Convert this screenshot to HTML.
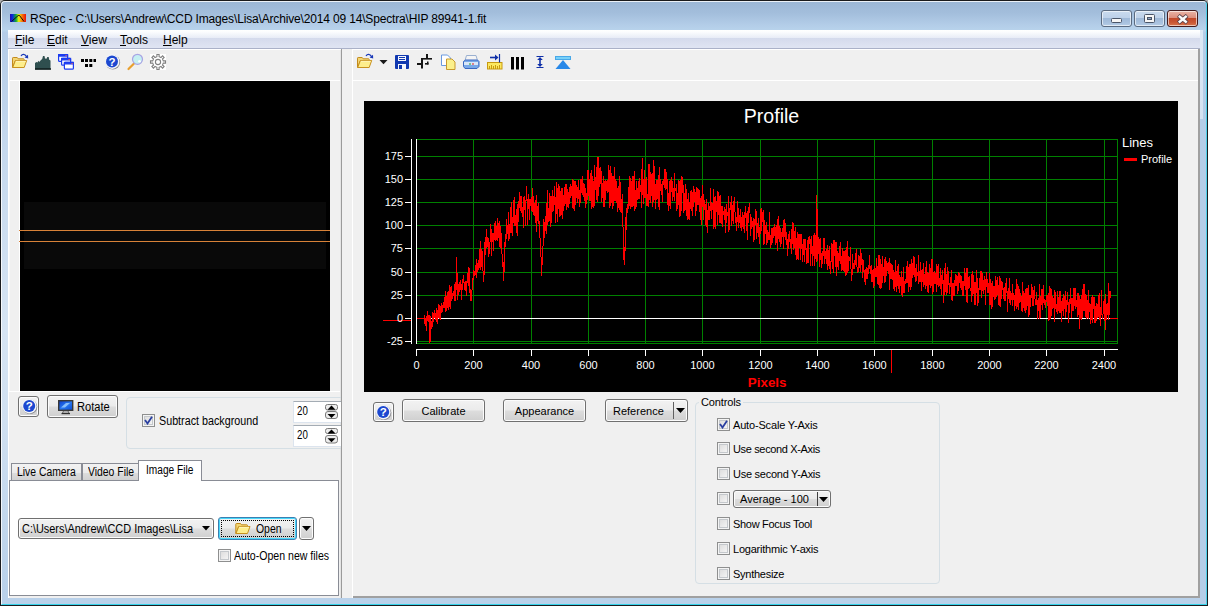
<!DOCTYPE html>
<html><head><meta charset="utf-8"><title>RSpec</title>
<style>
*{box-sizing:border-box;margin:0;padding:0}
html,body{width:1208px;height:606px;overflow:hidden}
body{position:relative;font-family:"Liberation Sans",sans-serif;font-size:11px;color:#000;background:#b0b0b0}
.abs{position:absolute}
#frame{position:absolute;left:0;top:0;width:1208px;height:606px;border-radius:5px 5px 0 0;
 background:linear-gradient(180deg,#9bb6d5 0,#a3bedc 12px,#b3cde8 24px,#b9d4ec 30px,rgba(185,209,234,0) 31px),
  linear-gradient(90deg,rgba(0,0,0,0) 0,rgba(0,0,0,0) 1199px,#b4cde8 1199px),
  linear-gradient(180deg,#b4cce8 30px,#c6d9ee 150px,#d6e4f3 330px,#d0e0f1 420px,#b9d1ea 590px);
 border:1px solid #1a1c20;border-top-color:#1a1a1c;}
#frame:before{content:"";position:absolute;left:0;top:0;right:0;bottom:0;border:1px solid rgba(255,255,255,.8);border-radius:4px 4px 0 0;border-bottom-color:#35d3ea;border-right-color:#4fd0ea}
#frame:after{content:"";position:absolute;left:1199px;top:29px;width:3px;height:89px;background:linear-gradient(180deg,#dce8f5,#d4e2f2)}
#title{left:30px;top:12px;font-size:12px;white-space:nowrap;line-height:15px;letter-spacing:-0.16px}
#client{left:8px;top:30px;width:1192px;height:568px;background:#f0f0f0}
#menubar{left:0;top:0;width:1192px;height:19px;background:linear-gradient(180deg,#ffffff 0,#fbfcfe 2px,#e9edf7 7.500px,#d4daec 8px,#dfe4f2 17.500px,#aab1c8 18px,#aab1c8 19px);}
.mi{position:absolute;top:3px;font-size:12px;line-height:15px}
.mi u{text-decoration:underline}
.wb{position:absolute;top:10px;height:17px;border:1px solid #5a6a80;border-radius:3px;box-shadow:inset 0 0 0 1px rgba(255,255,255,.6)}
#leftp{left:0;top:19px;width:334px;height:549px;overflow:hidden;background:#f0f0f0;border-right:1px solid #9a9a9a}
#rightp{left:344px;top:19px;width:848px;height:549px;background:#f0f0f0;border-right:2px solid #a0a0a0;border-bottom:2px solid #a0a0a0}
.btn{position:absolute;border:1px solid #707070;border-radius:3px;background:linear-gradient(180deg,#f2f2f2 0,#ebebeb 48%,#dddddd 52%,#cfcfcf 100%);box-shadow:inset 0 0 0 1px #fcfcfc;text-align:center;white-space:nowrap}
.cb{position:absolute;width:13px;height:13px;border:1px solid #8e8f8f;background:linear-gradient(135deg,#d8d8d8,#fafafa);box-shadow:inset 0 0 0 1px #f4f4f4, inset 0 0 0 2px #c4c8cc}
.lbl{position:absolute;white-space:nowrap;line-height:13px}
.rt{font-size:11px}
.lbl.rt{letter-spacing:-0.12px}
.ls{font-size:12px;transform-origin:0 50%}
</style></head><body>
<div id="frame"></div>
<!-- title bar -->
<svg class="abs" style="left:10px;top:14px" width="16" height="8" viewBox="0 0 16 8">
 <defs><linearGradient id="spec" x1="0" x2="1" y1="0" y2="0"><stop offset="0" stop-color="#2808b0"/><stop offset=".15" stop-color="#0828e0"/><stop offset=".38" stop-color="#10b030"/><stop offset=".55" stop-color="#f0f010"/><stop offset=".75" stop-color="#f87808"/><stop offset="1" stop-color="#e81010"/></linearGradient></defs>
 <rect width="16" height="8" fill="url(#spec)"/><path d="M1.500 7.500L8.200 1.500H9.500L14 7.500" stroke="#181008" stroke-width="1" fill="none"/>
</svg>
<div id="title" class="abs">RSpec - C:\Users\Andrew\CCD Images\Lisa\Archive\2014 09 14\Spectra\HIP 89941-1.fit</div>
<div class="wb" style="left:1101px;width:31px;background:linear-gradient(180deg,#c9daee 0,#bdd1e9 46%,#9fb9d8 50%,#a9c2df 80%,#b8cee7 100%)"><div class="abs" style="left:9px;top:7px;width:11px;height:5px;background:#f6f6f6;border:1px solid #4a5568;border-radius:1.500px"></div></div>
<div class="wb" style="left:1134px;width:31px;background:linear-gradient(180deg,#c9daee 0,#bdd1e9 46%,#9fb9d8 50%,#a9c2df 80%,#b8cee7 100%)"><div class="abs" style="left:9px;top:3px;width:11px;height:9px;background:#f6f6f6;border:1px solid #4a5568;border-radius:1.500px"><div class="abs" style="left:2px;top:2px;width:5px;height:3px;background:#8fa6c6;border:1px solid #4a5568"></div></div></div>
<div class="wb" style="left:1167px;width:31px;border-color:#431a1c;background:linear-gradient(180deg,#e9b4a6 0,#dc8e7c 46%,#c2492a 50%,#c95734 75%,#d8764c 100%)"><svg class="abs" style="left:8px;top:2.500px" width="14" height="12" viewBox="0 0 14 12"><path d="M2.300 1.500L11.200 8.900M11.200 1.500L2.300 8.900" stroke="#5a4048" stroke-width="4.200" fill="none"/><path d="M2.800 1.900L10.700 8.500M10.700 1.900L2.800 8.500" stroke="#fafafa" stroke-width="2.500" fill="none"/></svg></div>

<div id="client" class="abs">
 <div id="menubar" class="abs">
  <div class="mi" style="left:7px"><u>F</u>ile</div>
  <div class="mi" style="left:39px"><u>E</u>dit</div>
  <div class="mi" style="left:73px"><u>V</u>iew</div>
  <div class="mi" style="left:112px"><u>T</u>ools</div>
  <div class="mi" style="left:155px"><u>H</u>elp</div>
 </div>
 <div id="leftp" class="abs">
  <!-- toolbar icons -->
<div class="abs" style="left:0;top:0;width:333px;height:1px;background:#fff"></div><div class="abs" style="left:332px;top:1px;width:1px;height:548px;background:#e4e4e4"></div>
<svg class="abs" style="left:0;top:0" width="170" height="30" viewBox="8 49 170 30">
 <!-- open folder -->
 <g transform="translate(12 57)"><path d="M.5 10.300V1.200q0-.7.7-.7h4l1 1.300h5.300q.7 0 .7.700v1.500h-9l-2.600 6.500z" fill="#f3d572" stroke="#c28a1c" stroke-linejoin="round"/><path d="M.7 10.500l2.700-7h11.300l-2.500 7z" fill="#fdee8c" stroke="#c8921e" stroke-linejoin="round"/><path d="M3.900 4.300h9.800" stroke="#fff8c8" stroke-width=".8"/></g>
 <g transform="translate(20.7 53.7)"><path d="M.3 2.300c1.300-2.200 3.800-2.300 5.600 .6" fill="none" stroke="#1838b8" stroke-width="1.200"/><path d="M7.300 1l.2 3.800-3.600-.9z" fill="#1838b8"/></g>
 <!-- histogram -->
 <path d="M35 69.500v-6.500l1.500-1 1 .5 .8-1.800 .9 1.300 1.800-2 1.200-1 .8-3h1.500l.5 2.500 1.500.3 .8-1.800h1.400l.5 2.800 1.300.7v9z" fill="#2f4f4f"/>
 <path d="M35 69h16" stroke="#0c1818" stroke-width="1.400"/>
 <!-- windows cascade -->
 <g stroke="#1c3cf0" stroke-width="1.200" fill="#fff">
  <rect x="58.600" y="54.600" width="9" height="6.800" rx="1"/><rect x="58.600" y="54.600" width="9" height="1.500" fill="#1c3cf0"/>
  <rect x="61.600" y="58.400" width="9" height="6.800" rx="1"/><rect x="61.600" y="58.400" width="9" height="1.500" fill="#1c3cf0"/>
  <rect x="64.400" y="62.400" width="9" height="6.800" rx="1"/><rect x="64.400" y="62.400" width="9" height="1.500" fill="#1c3cf0"/>
 </g>
 <g fill="#f06060"><rect x="65.500" y="55" width="1.200" height="1.200"/><rect x="68.500" y="59" width="1.200" height="1.200"/><rect x="71.500" y="63" width="1.200" height="1.200"/></g>
 <!-- dots -->
 <g fill="#000"><rect x="81" y="59" width="3" height="3"/><rect x="85" y="59" width="3" height="3"/><rect x="89.300" y="59" width="3" height="3"/><rect x="93.500" y="59" width="2.500" height="3"/><rect x="85" y="64" width="3" height="3"/><rect x="89.300" y="64" width="3" height="3"/></g>
 <!-- help -->
 <circle cx="112.800" cy="62.300" r="7.300" fill="#8a8a90"/>
 <circle cx="112.200" cy="61.700" r="7.200" fill="#f4f6fa"/>
 <circle cx="112" cy="61.500" r="6" fill="#1c48d0"/>
 <text x="112" y="65.600" font-family="Liberation Sans, sans-serif" font-weight="bold" font-size="11.500" fill="#fff" text-anchor="middle">?</text>
 <!-- magnifier -->
 <path d="M133.800 63.800l-5.300 5.200" stroke="#e8a030" stroke-width="2.200" stroke-linecap="round"/>
 <circle cx="137.500" cy="59.300" r="5" fill="#c4f0f2" stroke="#a8a4e4" stroke-width="1.200"/>
 <circle cx="139.500" cy="61.300" r="1.300" fill="#fff"/>
 <!-- gear -->
 <rect x="150" y="54" width="16" height="16" fill="#fff"/>
 <g fill="none" stroke="#808080" stroke-width="1.100">
  <circle cx="158" cy="62" r="2.600"/>
  <path d="M156.9 56.7L156.9 54.5L159.1 54.5L159.1 56.7L161.0 57.5L162.6 55.9L164.1 57.4L162.5 59.0L163.3 60.9L165.5 60.9L165.5 63.1L163.3 63.1L162.5 65.0L164.1 66.6L162.6 68.1L161.0 66.5L159.1 67.3L159.1 69.5L156.9 69.5L156.9 67.3L155.0 66.5L153.4 68.1L151.9 66.6L153.5 65.0L152.7 63.1L150.5 63.1L150.5 60.9L152.7 60.9L153.5 59.0L151.9 57.4L153.4 55.9L155.0 57.5z"/>
 </g>
</svg>
<div class="abs" style="left:0;top:31px;width:332px;height:1px;background:#fff"></div><div class="abs" style="left:0;top:0;width:1px;height:549px;background:#fff"></div><div class="abs" style="left:11px;top:31px;width:1px;height:311px;background:#fff"></div><div class="abs" style="left:1px;top:31px;width:1px;height:311px;background:#f8f8f8"></div>
<!-- image -->
<div class="abs" style="left:12px;top:32px;width:310px;height:310px;background:#000">
 <div class="abs" style="left:4px;top:121px;width:302px;height:67px;background:#090909"></div>
 <div class="abs" style="left:-1px;top:149px;width:311px;height:1px;background:#d88238"></div>
 <div class="abs" style="left:-1px;top:160px;width:311px;height:1px;background:#d88238"></div>
</div>
<div class="abs" style="left:0;top:342px;width:332px;height:1px;background:#fff"></div>
<!-- help btn -->
<div class="btn" style="left:10px;top:347px;width:21px;height:21px"></div>
<svg class="abs" style="left:12.500px;top:348px" width="18" height="18" viewBox="0 0 18 18"><circle cx="9" cy="9.800" r="7.300" fill="#8a8a90"/><circle cx="8.400" cy="9.200" r="7.200" fill="#f4f6fa"/><circle cx="8.200" cy="9" r="6" fill="#1c48d0"/><text x="8.200" y="13.100" font-family="Liberation Sans, sans-serif" font-weight="bold" font-size="11.500" fill="#fff" text-anchor="middle">?</text></svg>
<!-- rotate -->
<div class="btn" style="left:39px;top:346px;width:71px;height:23px"></div>
<svg class="abs" style="left:50px;top:351px" width="16" height="15" viewBox="0 0 16 15"><defs><linearGradient id="scr" x1="0" y1="0" x2="1" y2="1"><stop offset="0" stop-color="#0838c8"/><stop offset=".5" stop-color="#2878f0"/><stop offset="1" stop-color="#0848d0"/></linearGradient></defs><rect x=".7" y=".7" width="14" height="9.600" fill="url(#scr)" stroke="#383838" stroke-width="1.400"/><path d="M3 7.500l5-4.500h4l-5 4.500z" fill="#a8d8ff" opacity=".75"/><path d="M5.500 11h4.500l1 2h-6.500z" fill="#f0f0f0" stroke="#484848" stroke-width=".8"/><path d="M3.500 13.600h8.500" stroke="#303030" stroke-width="1.200"/></svg>
<div class="lbl ls" style="left:69px;top:352px;transform:scaleX(0.925)">Rotate</div>
<!-- group -->
<div class="abs" style="left:118px;top:348px;width:230px;height:52px;border:1px solid #d5dfe5;border-radius:4px"></div>
<div class="cb" style="left:134px;top:365px"><svg class="abs" style="left:1px;top:1px" width="9" height="9" viewBox="0 0 9 9"><path d="M1 4l2.500 3.500L8 .8" fill="none" stroke="#2a3fa0" stroke-width="1.800"/></svg></div>
<div class="lbl ls" style="left:151px;top:366px;transform:scaleX(0.895)">Subtract background</div>
<div class="abs" style="left:285px;top:352px;width:50px;height:22px;background:#fff;border:1px solid #dce4ee;border-top-color:#a4acb4"></div>
<div class="lbl ls" style="left:289px;top:356px;transform:scaleX(0.810)">20</div>
<div class="abs" style="left:285px;top:376px;width:50px;height:22px;background:#fff;border:1px solid #dce4ee;border-top-color:#a4acb4"></div>
<div class="lbl ls" style="left:289px;top:380px;transform:scaleX(0.810)">20</div>
<svg class="abs" style="left:316px;top:354px" width="14" height="42" viewBox="0 0 14 42">
 <g fill="#ececec" stroke="#7a7a7a" stroke-width="1"><rect x="1.500" y="1.500" width="12" height="5.500" rx="2"/><rect x="1.500" y="8.500" width="12" height="7" rx="2.500"/><rect x="1.500" y="25.500" width="12" height="5" rx="2"/><rect x="1.500" y="32.500" width="12" height="7.500" rx="2.500"/></g>
 <g fill="#000"><path d="M3.500 6.800l4-4.300 4 4.300z"/><path d="M3.500 11l4 4 4-4z"/><path d="M3.500 30.500l4-4 4 4z"/><path d="M3.500 35.300l4 4 4-4z"/></g>
</svg>
<!-- tabs -->
<div class="abs" style="left:3px;top:414px;width:71px;height:18px;border:1px solid #898c95;border-bottom:none;background:linear-gradient(180deg,#f2f2f2 0,#ebebeb 50%,#dddddd 51%,#cfcfcf 100%)"></div>
<div class="abs" style="left:74px;top:414px;width:57px;height:18px;border:1px solid #898c95;border-bottom:none;background:linear-gradient(180deg,#f2f2f2 0,#ebebeb 50%,#dddddd 51%,#cfcfcf 100%)"></div>
<div class="abs" style="left:1px;top:431px;width:330px;height:116px;border:1px solid #898c95;background:#fff"></div>
<div class="abs" style="left:130px;top:411px;width:64px;height:21px;border:1px solid #898c95;border-bottom:none;background:#fff"></div>
<div class="lbl ls" style="left:9px;top:417px;transform:scaleX(0.865)">Live Camera</div>
<div class="lbl ls" style="left:80px;top:417px;transform:scaleX(0.866)">Video File</div>
<div class="lbl ls" style="left:138px;top:415px;transform:scaleX(0.845)">Image File</div>
<!-- combo -->
<div class="btn" style="left:10px;top:469px;width:196px;height:21px;text-align:left"></div>
<div class="lbl ls" style="left:14px;top:474px;transform:scaleX(0.909)">C:\Users\Andrew\CCD Images\Lisa</div>
<svg class="abs" style="left:194px;top:477px" width="8" height="5" viewBox="0 0 8 5"><path d="M0 0h8L4 4.500z" fill="#000"/></svg>
<!-- open -->
<div class="btn" style="left:210px;top:468px;width:79px;height:23px;border-color:#3c7fb1;box-shadow:inset 0 0 0 1px #48d8fb"></div>
<div class="abs" style="left:213px;top:471px;width:73px;height:17px;border:1px dotted #000"></div>
<svg class="abs" style="left:227px;top:473px" width="16" height="13" viewBox="0 0 16 13"><g transform="translate(0.3 1)"><path d="M.5 10.300V1.200q0-.7.7-.7h4l1 1.300h5.300q.7 0 .7.700v1.500h-9l-2.600 6.500z" fill="#f3d572" stroke="#c28a1c" stroke-linejoin="round"/><path d="M.7 10.500l2.700-7h11.300l-2.500 7z" fill="#fdee8c" stroke="#c8921e" stroke-linejoin="round"/><path d="M3.900 4.300h9.800" stroke="#fff8c8" stroke-width=".8"/></g></svg>
<div class="lbl ls" style="left:248px;top:474px;transform:scaleX(0.869)">Open</div>
<div class="btn" style="left:291px;top:468px;width:15px;height:23px"></div>
<svg class="abs" style="left:294px;top:477px" width="9" height="5" viewBox="0 0 9 5"><path d="M0 0h9L4.500 5z" fill="#000"/></svg>
<div class="cb" style="left:210px;top:500px"></div>
<div class="lbl ls" style="left:226px;top:501px;transform:scaleX(0.880)">Auto-Open new files</div>

 </div>
 <div id="rightp" class="abs">
  <div class="abs" style="left:0;top:0;width:1px;height:549px;background:#fff"></div>
<div class="abs" style="left:0;top:31px;width:846px;height:1px;background:#fff"></div>
<div class="abs" style="left:0;top:0;width:846px;height:1px;background:#fff"></div>
<svg class="abs" style="left:0;top:0" width="240" height="30" viewBox="352 49 240 30">
 <!-- folder -->
 <g transform="translate(357 57)"><path d="M.5 10.300V1.200q0-.7.7-.7h4l1 1.300h5.300q.7 0 .7.700v1.500h-9l-2.600 6.500z" fill="#f3d572" stroke="#c28a1c" stroke-linejoin="round"/><path d="M.7 10.500l2.700-7h11.300l-2.500 7z" fill="#fdee8c" stroke="#c8921e" stroke-linejoin="round"/><path d="M3.900 4.300h9.800" stroke="#fff8c8" stroke-width=".8"/></g>
 <g transform="translate(365.7 53.7)"><path d="M.3 2.300c1.300-2.200 3.800-2.300 5.600 .6" fill="none" stroke="#1838b8" stroke-width="1.200"/><path d="M7.300 1l.2 3.800-3.600-.9z" fill="#1838b8"/></g>
 <path d="M379.500 60h8l-4 4.200z" fill="#1a1a1a"/>
 <!-- save -->
 <rect x="395" y="55" width="14" height="14" rx="1" fill="#1038b0"/>
 <rect x="398" y="56" width="8" height="5" fill="#f4f6fc"/><path d="M399 57.500h6M399 59.500h6" stroke="#1038b0" stroke-width="1"/>
 <rect x="398" y="64" width="8" height="5" fill="#f4f6fc"/><rect x="399" y="65" width="3" height="4" fill="#1038b0"/>
 <!-- crosshair -->
 <g fill="#151515"><rect x="417" y="63" width="5" height="2"/><rect x="421" y="58" width="2" height="10.500"/><rect x="421" y="58" width="11" height="1.600"/><rect x="426" y="54" width="2" height="4.500"/><rect x="425" y="63" width="3.500" height="1.600"/><rect x="427" y="61.500" width="1.500" height="3"/></g>
 <!-- copy -->
 <path d="M441.500 55h6l3 3v7.500h-9z" fill="#fff" stroke="#6a9ae0"/>
 <path d="M446.500 59h5.500l3 3v7.500h-8.500z" fill="#fbf08c" stroke="#c89a2e"/>
 <!-- printer -->
 <path d="M466.500 55.500h9.500l1.500 5h-12.500z" fill="#f4f4f4" stroke="#9ab0d0"/>
 <path d="M463.500 61.500l2-1.500h12l1.500 1.500v5l-2 2h-12l-1.500-2z" fill="#78a8e8" stroke="#3a68c0"/>
 <rect x="464" y="62" width="14" height="3" fill="#d8e6f8"/><rect x="469" y="63.500" width="2" height="1" fill="#20a020"/><rect x="472" y="63.500" width="2" height="1" fill="#e02020"/>
 <!-- ruler -->
 <rect x="487.500" y="62.500" width="14.500" height="6.500" fill="#fbe860" stroke="#c89a10"/>
 <path d="M489.500 66v3M491.500 65v4M493.500 66v3M495.500 65v4M497.500 66v3M499.500 65v4" stroke="#c89a10" stroke-width="1"/>
 <path d="M490 57.500h6" stroke="#1030a8" stroke-width="1.600"/><path d="M495 54.500l3.500 3-3.500 3z" fill="#1030a8"/><path d="M499.500 54v8.500" stroke="#1030a8" stroke-width="1.200"/>
 <!-- bars -->
 <rect x="511" y="57" width="3" height="12.500" fill="#000"/><rect x="516" y="57" width="3" height="12.500" fill="#000"/><rect x="521" y="57" width="3" height="12.500" fill="#000"/>
 <!-- v arrows -->
 <g stroke="#1030a8" fill="#1030a8"><path d="M536.500 56.500h7M536.500 67.500h7" stroke-width="1"/><path d="M540 58v8" stroke-width="1.600"/><path d="M540 57l2.800 3h-5.600zM540 67l2.800-3h-5.600z" stroke="none"/></g>
 <!-- triangle -->
 <rect x="555.500" y="56.500" width="15" height="3" fill="#78d0f8" stroke="#48a8e8"/>
 <path d="M563 60l7.500 9h-15z" fill="#2888e8"/>
</svg>

<svg class="abs" style="left:12px;top:52px" width="814" height="291" viewBox="364 101 814 291" font-family="Liberation Sans, sans-serif">
 <rect x="364" y="101" width="814" height="291" fill="#000"/>
 <g stroke="#008000" stroke-width="1" shape-rendering="crispEdges" fill="none">
  <path d="M416 139.500H1118M416 156.500H1118M416 179.500H1118M416 202.500H1118M416 225.500H1118M416 248.500H1118M416 272.500H1118M416 295.500H1118M416 341.500H1118M416 343.500H1118"/>
  <path d="M473.500 139V344M531.500 139V344M588.500 139V344M645.500 139V344M702.500 139V344M760.500 139V344M817.500 139V344M874.500 139V344M932.500 139V344M989.500 139V344M1046.500 139V344M1104.500 139V344M1117.500 139V344"/>
 </g>
 <g stroke="#fff" stroke-width="1" shape-rendering="crispEdges" fill="none">
  <path d="M416 318.500H1118"/>
  <path d="M416.500 139V344M411.500 139V344"/>
  <path d="M405 156.500h6M405 179.500h6M405 202.500h6M405 225.500h6M405 248.500h6M405 272.500h6M405 295.500h6M405 318.500h6M405 341.500h6"/>
  <path d="M416 349.500H1118"/>
  <path d="M416.500 350v6M473.500 350v6M531.500 350v6M588.500 350v6M645.500 350v6M702.500 350v6M760.500 350v6M817.500 350v6M874.500 350v6M932.500 350v6M989.500 350v6M1046.500 350v6M1104.500 350v6"/>
 </g>
 <g stroke="#ff0000" stroke-width="1" shape-rendering="crispEdges"><path d="M383 320.500H411M417 318.500H424M1110 318.500H1118M891.500 350V373"/></g>
 <polyline fill="none" stroke="#ff0000" stroke-width="1" stroke-linejoin="bevel" shape-rendering="crispEdges" points="424.2,323.6 424.5,315.6 424.8,315.9 425.1,325.5 425.4,323.9 425.7,324.8 425.9,318.1 426.2,321.3 426.5,316.5 426.8,331.3 427.1,311.5 427.4,320.9 427.7,316.3 428,320.9 428.2,322.1 428.5,317.1 428.8,314.9 429.1,320.7 429.4,320.2 429.7,315.3 430,343.2 430.3,327.6 430.5,316.5 430.8,322.5 431.1,329.4 431.4,323 431.7,320.8 432,324.9 432.3,326.5 432.5,317.5 432.8,312.4 433.1,318.8 433.4,321.6 433.7,314.8 434,312.6 434.3,318.2 434.6,313 434.8,309.8 435.1,316.8 435.4,320.1 435.7,313 436,313.3 436.3,308 436.6,321.8 436.8,317.9 437.1,318.6 437.4,323.7 437.7,312.4 438,309.7 438.3,318.3 438.6,304 438.9,307.1 439.1,307.9 439.4,308.9 439.7,305.1 440,318.6 440.3,306.4 440.6,306 440.9,320.1 441.1,306.7 441.4,310 441.7,303.2 442,310.4 442.3,307.3 442.6,304.7 442.9,311.9 443.2,302.3 443.4,306.3 443.7,302.1 444,308.1 444.3,297.5 444.6,300.1 444.9,304.7 445.2,299.1 445.4,294.7 445.7,290.9 446,312 446.3,295.8 446.6,298.2 446.9,301.5 447.2,307.1 447.5,292.1 447.7,308.2 448,295.9 448.3,290.8 448.6,309.5 448.9,300.7 449.2,307 449.5,296.4 449.7,287.7 450,284.8 450.3,308.9 450.6,300.6 450.9,291.8 451.2,285.6 451.5,293 451.8,300.5 452,293.2 452.3,295 452.6,295.9 452.9,299.2 453.2,291.3 453.5,291.5 453.8,293.9 454.1,294.5 454.3,301.4 454.6,295.6 454.9,283.8 455.2,293 455.5,301.3 455.8,281.9 456.1,287.1 456.3,277.3 456.6,289.8 456.9,257.1 457.2,299.8 457.5,280.3 457.8,276 458.1,294.7 458.4,293.3 458.6,284.4 458.9,294.1 459.2,290 459.5,290.3 459.8,286.3 460.1,279.7 460.4,287 460.6,280.5 460.9,289.7 461.2,284.2 461.5,299.7 461.8,296.3 462.1,280.1 462.4,289.8 462.7,281.2 462.9,281.2 463.2,275.4 463.5,278.8 463.8,277.1 464.1,285 464.4,289 464.7,289 464.9,287 465.2,291.4 465.5,287 465.8,283.4 466.1,280.7 466.4,284.8 466.7,295.9 467,282.4 467.2,280 467.5,273.5 467.8,276.9 468.1,285.6 468.4,286 468.7,266.7 469,275.2 469.2,268.1 469.5,269.6 469.8,292.5 470.1,289.3 470.4,294.9 470.7,299.2 471,301.1 471.3,301 471.5,295.8 471.8,300.9 472.1,286.1 472.4,286.4 472.7,277.7 473,281 473.3,272.3 473.6,270.4 473.8,273.3 474.1,271.6 474.4,273 474.7,276.3 475,273.2 475.3,274.8 475.6,267 475.8,269 476.1,263.6 476.4,277.7 476.7,259.3 477,271.5 477.3,270.4 477.6,265.2 477.9,267.2 478.1,259.6 478.4,266 478.7,269.5 479,267 479.3,248.7 479.6,258.5 479.9,267.8 480.1,257.5 480.4,269.9 480.7,241.4 481,268.4 481.3,249.8 481.6,250 481.9,266.8 482.2,253.1 482.4,250.7 482.7,261.3 483,271.3 483.3,273.7 483.6,282.1 483.9,276.9 484.2,271.7 484.4,256.1 484.7,261.7 485,242.4 485.3,251.4 485.6,255.3 485.9,241.7 486.2,229.3 486.5,235.1 486.7,247.5 487,236.1 487.3,245.8 487.6,242.2 487.9,239.6 488.2,257.4 488.5,238.4 488.7,249.3 489,246.1 489.3,253 489.6,253.3 489.9,247.9 490.2,231.8 490.5,224 490.8,239.2 491,228.9 491.3,241.1 491.6,255.8 491.9,237 492.2,234.2 492.5,242 492.8,235.2 493,232.6 493.3,245.5 493.6,251 493.9,239.4 494.2,239.2 494.5,240.3 494.8,227.9 495.1,221 495.3,240.5 495.6,230.1 495.9,227.7 496.2,229.7 496.5,226.5 496.8,239.6 497.1,229 497.4,218.1 497.6,228 497.9,241 498.2,229.5 498.5,223.3 498.8,231.5 499.1,240.2 499.4,220.9 499.6,246.9 499.9,231.1 500.2,236.4 500.5,247.8 500.8,226.5 501.1,235.4 501.4,250.1 501.7,235.3 501.9,246.2 502.2,267 502.5,256.3 502.8,256.4 503.1,263.9 503.4,276.7 503.7,281.1 503.9,273.9 504.2,269.5 504.5,247.2 504.8,246.9 505.1,239.9 505.4,234.3 505.7,246.6 506,241.8 506.2,219.5 506.5,229.1 506.8,233.6 507.1,226.6 507.4,233.4 507.7,225.2 508,233.5 508.2,223.6 508.5,240.7 508.8,211.9 509.1,229.1 509.4,238.9 509.7,225.2 510,226.1 510.3,220.5 510.5,232.7 510.8,217.1 511.1,201.8 511.4,232.7 511.7,216.2 512,222.2 512.3,216.7 512.5,236.2 512.8,229.2 513.1,212.7 513.4,217.2 513.7,200 514,223.1 514.3,214 514.6,196.7 514.8,223.9 515.1,226.3 515.4,219.2 515.7,221.7 516,215.3 516.3,224 516.6,233 516.8,222.8 517.1,204.2 517.4,207.5 517.7,236.2 518,216.8 518.3,222.2 518.6,205.8 518.9,213.3 519.1,191.6 519.4,201.2 519.7,201.4 520,208.4 520.3,210.5 520.6,206.4 520.9,196.4 521.2,204 521.4,212.9 521.7,195.9 522,206.9 522.3,209.5 522.6,216.7 522.9,214.1 523.2,214.7 523.4,227.6 523.7,197.1 524,201.6 524.3,209.5 524.6,196.2 524.9,202.3 525.2,201.6 525.5,226.3 525.7,208.7 526,200.5 526.3,189 526.6,186.3 526.9,190.5 527.2,217.4 527.5,224.9 527.7,198.8 528,204.3 528.3,194.3 528.6,205.5 528.9,201.7 529.2,219.6 529.5,198.9 529.8,208.1 530,200 530.3,199.1 530.6,205.5 530.9,201.2 531.2,204.9 531.5,197.1 531.8,200.1 532,211.4 532.3,212.1 532.6,188.1 532.9,207.6 533.2,196.5 533.5,203.1 533.8,213.4 534.1,215.7 534.3,207 534.6,206 534.9,202.8 535.2,222.7 535.5,216.3 535.8,211.8 536.1,195.2 536.3,231.7 536.6,208.8 536.9,219.7 537.2,211 537.5,221.2 537.8,213.6 538.1,202.9 538.4,216.2 538.6,215.5 538.9,218.9 539.2,231.5 539.5,221.2 539.8,231.4 540.1,241.2 540.4,240.1 540.6,249.6 540.9,250.5 541.2,266 541.5,276.2 541.8,263.5 542.1,264.5 542.4,255.3 542.7,251.3 542.9,248.1 543.2,242.9 543.5,235.5 543.8,219.5 544.1,224.3 544.4,237.5 544.7,221.6 545,233.6 545.2,216.4 545.5,228.6 545.8,227.9 546.1,212.8 546.4,213.6 546.7,233.9 547,203.2 547.2,190.6 547.5,224.7 547.8,190 548.1,215.4 548.4,213 548.7,209.3 549,222.2 549.3,193.3 549.5,201.4 549.8,214.2 550.1,209 550.4,226.5 550.7,209.4 551,195.7 551.3,223.3 551.5,209.8 551.8,203.5 552.1,193.9 552.4,190.5 552.7,209.3 553,212.2 553.3,199.5 553.6,207.9 553.8,207.1 554.1,192.3 554.4,185.7 554.7,200.6 555,205.3 555.3,197 555.6,222.9 555.8,202.9 556.1,213.8 556.4,182.3 556.7,194.6 557,200.6 557.3,204 557.6,222 557.9,194 558.1,184.1 558.4,209 558.7,193.8 559,193.2 559.3,217.3 559.6,187.6 559.9,186 560.1,197.9 560.4,200.8 560.7,191.5 561,216.3 561.3,198.7 561.6,188.2 561.9,212.7 562.2,188.5 562.4,203.5 562.7,219.3 563,199.8 563.3,209 563.6,194.9 563.9,210.8 564.2,186.7 564.4,205.8 564.7,193.9 565,204 565.3,200.9 565.6,184.3 565.9,194.7 566.2,201.2 566.5,210.4 566.7,184.1 567,188.6 567.3,200 567.6,193.7 567.9,207.4 568.2,207.2 568.5,205 568.8,192.1 569,192.6 569.3,203.8 569.6,187.5 569.9,186.9 570.2,193.5 570.5,183.9 570.8,198.3 571,196.3 571.3,189.8 571.6,195.2 571.9,186 572.2,208.3 572.5,178.9 572.8,202.9 573.1,196.1 573.3,209.2 573.6,187.5 573.9,180 574.2,182.1 574.5,184.6 574.8,210.7 575.1,202.1 575.3,198.5 575.6,203.5 575.9,180.8 576.2,191 576.5,193.2 576.8,187.5 577.1,203.2 577.4,202.6 577.6,202.2 577.9,186.9 578.2,188.5 578.5,185.8 578.8,180.2 579.1,206.9 579.4,198 579.6,190.1 579.9,206.5 580.2,197.4 580.5,180.2 580.8,179.1 581.1,179.3 581.4,190.6 581.7,193.3 581.9,178.9 582.2,194.9 582.5,186.9 582.8,175.8 583.1,194.5 583.4,197.1 583.7,190.3 583.9,183.4 584.2,184.6 584.5,188.1 584.8,183.6 585.1,207.5 585.4,199.1 585.7,187.6 586,199.7 586.2,204.2 586.5,202.6 586.8,199.3 587.1,190.9 587.4,200.2 587.7,186 588,169.6 588.2,190.1 588.5,174.1 588.8,184.1 589.1,200.7 589.4,191 589.7,199 590,179.3 590.3,200.8 590.5,172.9 590.8,181.2 591.1,208.9 591.4,178.7 591.7,169.9 592,196.2 592.3,176.1 592.6,207.3 592.8,184.2 593.1,205.6 593.4,181.4 593.7,206.9 594,208.1 594.3,182.1 594.6,165.1 594.8,193.1 595.1,176.9 595.4,185 595.7,189.8 596,179.1 596.3,167.4 596.6,199.8 596.9,177.5 597.1,181.8 597.4,201.7 597.7,167.2 598,157.4 598.3,196.1 598.6,165.5 598.9,184.5 599.1,186.9 599.4,167.9 599.7,182.3 600,181.1 600.3,167.4 600.6,169.9 600.9,174.3 601.2,200.3 601.4,202.2 601.7,171.5 602,194.9 602.3,183.1 602.6,197.8 602.9,189.7 603.2,204.7 603.4,175.8 603.7,207.4 604,198.8 604.3,198.6 604.6,180.9 604.9,206.9 605.2,188.9 605.5,189.2 605.7,179.9 606,180.2 606.3,190.7 606.6,182.8 606.9,189.8 607.2,180.4 607.5,187 607.7,193.3 608,186.4 608.3,182 608.6,164.8 608.9,191.9 609.2,183 609.5,170.1 609.8,208.1 610,206.4 610.3,200.3 610.6,188.3 610.9,165.8 611.2,182.9 611.5,173.8 611.8,190 612.1,208.9 612.3,209 612.6,176.4 612.9,185.9 613.2,202.6 613.5,175.7 613.8,205.5 614.1,167.3 614.3,172.3 614.6,197.2 614.9,201.2 615.2,179.5 615.5,201.4 615.8,179.7 616.1,202.9 616.4,180.8 616.6,189 616.9,195.2 617.2,200.6 617.5,188.4 617.8,212.4 618.1,195 618.4,196.9 618.6,185.8 618.9,207.8 619.2,176.3 619.5,199.4 619.8,209.5 620.1,183.5 620.4,182 620.7,203.2 620.9,212.2 621.2,204.2 621.5,213.4 621.8,211.3 622.1,194.5 622.4,209.9 622.7,217.1 622.9,222 623.2,234.8 623.5,237.1 623.8,247.2 624.1,265 624.4,263.9 624.7,246.7 625,251.2 625.2,246.5 625.5,217 625.8,225.7 626.1,230 626.4,207.7 626.7,220.5 627,214.1 627.2,203.7 627.5,206.7 627.8,211.9 628.1,208.3 628.4,207.4 628.7,187.3 629,206.3 629.3,203.6 629.5,175.8 629.8,201.6 630.1,178.6 630.4,179.8 630.7,195.3 631,208.8 631.3,187.8 631.5,185.1 631.8,181.5 632.1,191.2 632.4,178.5 632.7,176.4 633,206.8 633.3,175.7 633.6,189.6 633.8,199.6 634.1,194.9 634.4,170.6 634.7,180.5 635,211.2 635.3,190.3 635.6,192.6 635.9,192.8 636.1,196.3 636.4,206.6 636.7,180.7 637,200.6 637.3,194.1 637.6,196.5 637.9,197.7 638.1,181.1 638.4,185 638.7,196.6 639,199.4 639.3,194 639.6,177.7 639.9,187 640.2,185.6 640.4,191.7 640.7,190.7 641,185.2 641.3,208.2 641.6,169.2 641.9,196 642.2,193.4 642.4,158 642.7,179.3 643,186 643.3,192.8 643.6,203.7 643.9,183.8 644.2,172.2 644.5,195.7 644.7,170 645,198 645.3,193.4 645.6,179.1 645.9,184.9 646.2,177.2 646.5,193.5 646.7,196.8 647,206.4 647.3,198.9 647.6,197.6 647.9,201.6 648.2,182 648.5,193.1 648.8,207.2 649,164.3 649.3,195.3 649.6,200.1 649.9,172 650.2,172.9 650.5,199.1 650.8,202.8 651,197.5 651.3,173.6 651.6,189.9 651.9,195.6 652.2,186.9 652.5,173.1 652.8,207.1 653.1,191.1 653.3,202.4 653.6,165.5 653.9,160.4 654.2,176.4 654.5,188.7 654.8,179.8 655.1,208.7 655.3,184.3 655.6,202.5 655.9,202.4 656.2,195.5 656.5,191.6 656.8,181.3 657.1,180 657.4,184.9 657.6,198.6 657.9,180.5 658.2,189.5 658.5,175 658.8,198.5 659.1,209.6 659.4,193.7 659.7,167.2 659.9,183.3 660.2,190.8 660.5,178.9 660.8,183.3 661.1,183.9 661.4,194.8 661.7,188.4 661.9,187.1 662.2,196.6 662.5,202 662.8,188.1 663.1,179 663.4,182.7 663.7,184.5 664,184.5 664.2,169.1 664.5,187.5 664.8,178.9 665.1,169.5 665.4,190.1 665.7,187.8 666,179.3 666.2,172.3 666.5,187.6 666.8,187.2 667.1,190.3 667.4,204.8 667.7,179.2 668,194.5 668.3,210.8 668.5,193.5 668.8,211.1 669.1,203.2 669.4,192 669.7,202.4 670,180.6 670.3,208.7 670.5,189.7 670.8,186.6 671.1,176.7 671.4,182.8 671.7,190.5 672,192.3 672.3,193.9 672.6,180.8 672.8,200.7 673.1,187.9 673.4,194.7 673.7,191.1 674,196.8 674.3,173.3 674.6,201.3 674.8,191.5 675.1,191.3 675.4,187.8 675.7,189.6 676,190 676.3,184 676.6,211.3 676.9,194.9 677.1,208.6 677.4,192.7 677.7,208.2 678,205.9 678.3,196.2 678.6,180.5 678.9,189.5 679.1,192.6 679.4,180.7 679.7,206.4 680,217 680.3,200.9 680.6,199.4 680.9,183.1 681.2,176.2 681.4,211.2 681.7,176.4 682,180 682.3,188 682.6,193.2 682.9,176.9 683.2,196.5 683.5,202.6 683.7,196.1 684,212.5 684.3,192.8 684.6,199.1 684.9,194.5 685.2,194.3 685.5,209.7 685.7,184.2 686,209.4 686.3,189.1 686.6,215.9 686.9,194.9 687.2,207.8 687.5,198.6 687.8,206.2 688,219.8 688.3,211.4 688.6,198.8 688.9,192.9 689.2,215.5 689.5,220.3 689.8,209.3 690,202.3 690.3,206.9 690.6,208.9 690.9,191.3 691.2,190.2 691.5,192.7 691.8,210.7 692.1,200 692.3,203 692.6,216.3 692.9,191.8 693.2,200.3 693.5,206.6 693.8,186.4 694.1,193.5 694.3,192.6 694.6,189.1 694.9,194.3 695.2,215.5 695.5,206.3 695.8,191.7 696.1,210.6 696.4,202.1 696.6,198.4 696.9,187.5 697.2,189.1 697.5,193.5 697.8,205 698.1,193.5 698.4,197.7 698.6,205.1 698.9,189.2 699.2,198.4 699.5,211.7 699.8,190.5 700.1,206.7 700.4,197.8 700.7,220.2 700.9,204.5 701.2,214.4 701.5,214.8 701.8,224.7 702.1,184.9 702.4,206.5 702.7,202.5 703,193.5 703.2,206.5 703.5,199.9 703.8,219.7 704.1,203.5 704.4,210 704.7,200.5 705,204 705.2,220.4 705.5,225.4 705.8,216.8 706.1,198.6 706.4,201.9 706.7,202.3 707,226.5 707.3,232.5 707.5,213.3 707.8,210.3 708.1,213.3 708.4,203.4 708.7,209 709,219.6 709.3,219.3 709.5,206 709.8,206.9 710.1,208.7 710.4,188.2 710.7,210.7 711,206.8 711.3,218.5 711.6,212 711.8,202.9 712.1,202.6 712.4,210.2 712.7,204.6 713,208.2 713.3,228.3 713.6,228.6 713.8,189.5 714.1,200.6 714.4,209.9 714.7,227.3 715,222.7 715.3,195.6 715.6,229.3 715.9,213.2 716.1,201 716.4,208.5 716.7,202.4 717,211.6 717.3,190.8 717.6,221 717.9,224.5 718.1,207.8 718.4,191.7 718.7,211.4 719,200.2 719.3,216.5 719.6,223.3 719.9,196.9 720.2,195.3 720.4,195.8 720.7,216 721,223.4 721.3,223.7 721.6,214.1 721.9,206 722.2,206.9 722.4,226.8 722.7,210.3 723,212.2 723.3,211.5 723.6,212.8 723.9,214.7 724.2,206.7 724.5,211.6 724.7,210.7 725,220.1 725.3,209.2 725.6,214.5 725.9,232.6 726.2,208.6 726.5,217.1 726.8,204.3 727,215.4 727.3,214.9 727.6,211.8 727.9,214.2 728.2,218.7 728.5,232.4 728.8,195.8 729,230.4 729.3,218 729.6,208.1 729.9,211 730.2,209.2 730.5,207.3 730.8,202.4 731.1,212.2 731.3,196.2 731.6,225.6 731.9,213.2 732.2,219.2 732.5,221.2 732.8,212.9 733.1,201.3 733.3,223.2 733.6,223.3 733.9,209 734.2,210.9 734.5,197.4 734.8,206.2 735.1,214.3 735.4,220 735.6,214.7 735.9,218.7 736.2,230.7 736.5,217.1 736.8,219 737.1,219.7 737.4,221.7 737.6,200.7 737.9,210.7 738.2,208.4 738.5,223.9 738.8,228.1 739.1,220.9 739.4,215.7 739.7,221.7 739.9,220.2 740.2,208.9 740.5,215.6 740.8,228.4 741.1,223 741.4,225.4 741.7,217.2 741.9,230.6 742.2,221 742.5,212.4 742.8,219.1 743.1,228.5 743.4,225.7 743.7,218.5 744,215 744.2,211.6 744.5,221.4 744.8,233.1 745.1,206.2 745.4,217.4 745.7,216.4 746,217.5 746.2,230.8 746.5,223.9 746.8,218.3 747.1,210.8 747.4,220.4 747.7,239.8 748,223.6 748.3,217.9 748.5,208.7 748.8,214.6 749.1,203 749.4,207.8 749.7,208.6 750,212.7 750.3,235.6 750.6,213.9 750.8,216.4 751.1,229 751.4,216.7 751.7,218.5 752,227.2 752.3,224 752.6,225.4 752.8,220.7 753.1,227.2 753.4,217.9 753.7,241.7 754,226.1 754.3,239.8 754.6,228.3 754.9,218.6 755.1,223.6 755.4,224.9 755.7,223.3 756,208.9 756.3,234.9 756.6,215.7 756.9,239 757.1,229 757.4,223 757.7,232.9 758,222.8 758.3,217.8 758.6,236.5 758.9,225.8 759.2,228.8 759.4,243.6 759.7,227.2 760,233.2 760.3,212.7 760.6,234.2 760.9,209.5 761.2,231.1 761.4,207.9 761.7,221.1 762,222 762.3,218.8 762.6,218 762.9,213.3 763.2,210.3 763.5,230.3 763.7,239.1 764,245.4 764.3,231.1 764.6,220.3 764.9,224.1 765.2,226.7 765.5,231.3 765.7,234.2 766,230.9 766.3,224.6 766.6,245.2 766.9,221.7 767.2,242.6 767.5,230.3 767.8,235 768,232.6 768.3,239.2 768.6,240.3 768.9,231.7 769.2,239.9 769.5,211.8 769.8,235.1 770,236.3 770.3,235.4 770.6,240.4 770.9,248.3 771.2,233 771.5,227.8 771.8,245 772.1,230.9 772.3,242.5 772.6,231.6 772.9,228 773.2,226.9 773.5,227.6 773.8,238.4 774.1,223.7 774.4,236.2 774.6,228.9 774.9,225.7 775.2,235.3 775.5,244.5 775.8,227 776.1,243.2 776.4,241.2 776.6,243.3 776.9,225.4 777.2,234.9 777.5,251.1 777.8,226.8 778.1,216 778.4,217.1 778.7,239.3 778.9,233.4 779.2,229.5 779.5,226.1 779.8,234.2 780.1,244.8 780.4,227.8 780.7,229.2 780.9,247.4 781.2,238.6 781.5,232.8 781.8,235.4 782.1,230.7 782.4,228.3 782.7,230.8 783,237 783.2,248.6 783.5,230.5 783.8,223.4 784.1,218.8 784.4,236.9 784.7,237.1 785,223.5 785.2,223.7 785.5,234 785.8,230.7 786.1,244.4 786.4,232.1 786.7,245.3 787,239.1 787.3,239.1 787.5,242.4 787.8,255.6 788.1,246 788.4,234.5 788.7,239.1 789,242.3 789.3,234.9 789.5,232.6 789.8,231.2 790.1,246.7 790.4,239.2 790.7,242.6 791,247.8 791.3,253.6 791.6,240.8 791.8,248.1 792.1,222.4 792.4,241.2 792.7,242.5 793,244.2 793.3,223.3 793.6,249.5 793.8,242.4 794.1,248.2 794.4,242.3 794.7,241.6 795,231.3 795.3,254.7 795.6,241.9 795.9,226.9 796.1,246.7 796.4,243.7 796.7,250.4 797,259.8 797.3,243.4 797.6,231.7 797.9,247.1 798.2,260 798.4,240.5 798.7,242.4 799,234 799.3,235 799.6,246 799.9,239.9 800.2,260.4 800.4,233.6 800.7,242.3 801,234.1 801.3,234.5 801.6,247.1 801.9,245.9 802.2,252.8 802.5,262.3 802.7,246.2 803,243.7 803.3,255.3 803.6,238.7 803.9,244.6 804.2,241.4 804.5,252.8 804.7,262.2 805,238.8 805.3,240.5 805.6,247.3 805.9,250.3 806.2,249.1 806.5,247.9 806.8,251.5 807,264.3 807.3,239.8 807.6,261 807.9,250.4 808.2,250.2 808.5,245.1 808.8,262.6 809,236.6 809.3,241.8 809.6,240.9 809.9,236.4 810.2,255.7 810.5,265.9 810.8,245.5 811.1,236.5 811.3,238 811.6,253.9 811.9,249.9 812.2,246.5 812.5,266 812.8,255.6 813.1,255.4 813.3,235 813.6,255.8 813.9,235.3 814.2,249.9 814.5,265.7 814.8,232.6 815.1,259.4 815.4,244.8 815.6,234.8 815.9,255.7 816.2,262.3 816.5,230.2 816.8,195 817.1,214.5 817.4,261.4 817.6,255.1 817.9,242.7 818.2,254.4 818.5,245.8 818.8,236.6 819.1,240.3 819.4,238.8 819.7,240.8 819.9,267.2 820.2,237.7 820.5,249.5 820.8,253.8 821.1,262.8 821.4,267.6 821.7,263.2 822,253.3 822.2,264 822.5,260.8 822.8,259.1 823.1,247.3 823.4,256.3 823.7,255 824,237.8 824.2,256.8 824.5,248.4 824.8,263.9 825.1,251.1 825.4,253.2 825.7,252.8 826,258.8 826.3,264.1 826.5,257.5 826.8,259.1 827.1,245.3 827.4,246.6 827.7,269.6 828,249.4 828.3,259.7 828.5,251.1 828.8,260 829.1,269.2 829.4,246.3 829.7,251.6 830,267.3 830.3,273.5 830.6,261.1 830.8,267.2 831.1,259.7 831.4,249 831.7,242.9 832,259.9 832.3,244 832.6,246 832.8,260.9 833.1,272.5 833.4,249.2 833.7,251.6 834,239.7 834.3,244.2 834.6,250.3 834.9,242 835.1,267.4 835.4,256 835.7,260.4 836,241.9 836.3,252.9 836.6,275.8 836.9,245.6 837.1,266.8 837.4,251.3 837.7,263 838,256.4 838.3,252.9 838.6,257.1 838.9,270.4 839.2,246.1 839.4,255.5 839.7,259.4 840,252.8 840.3,264.4 840.6,242.1 840.9,257.5 841.2,256.3 841.5,256.6 841.7,268.4 842,270.9 842.3,258.1 842.6,257 842.9,247.9 843.2,256.2 843.5,270.6 843.7,255.7 844,253.1 844.3,251.5 844.6,257.8 844.9,272.3 845.2,250.4 845.5,268 845.8,256 846,276 846.3,254.5 846.6,268.9 846.9,251.7 847.2,240.6 847.5,251.1 847.8,272.9 848,270.9 848.3,270.3 848.6,256.2 848.9,259.3 849.2,261.1 849.5,259.8 849.8,257.4 850.1,256.9 850.3,247.3 850.6,263.6 850.9,261.3 851.2,280.5 851.5,275.7 851.8,269.9 852.1,274.6 852.3,261.7 852.6,254.2 852.9,268 853.2,268.6 853.5,268.9 853.8,263.1 854.1,269.4 854.4,260.5 854.6,261.8 854.9,261.5 855.2,257.7 855.5,264.6 855.8,263.7 856.1,248.9 856.4,265.7 856.6,258 856.9,265 857.2,269.8 857.5,269.9 857.8,273.4 858.1,265.8 858.4,271.6 858.7,270 858.9,254.9 859.2,267.5 859.5,255.9 859.8,264.1 860.1,258.6 860.4,272.4 860.7,265.5 860.9,249.3 861.2,259.4 861.5,257.8 861.8,265.1 862.1,259.4 862.4,278.2 862.7,275.4 863,263.7 863.2,260.2 863.5,271.7 863.8,269.7 864.1,271.4 864.4,269.9 864.7,279.4 865,281.7 865.3,269.3 865.5,284.7 865.8,277.8 866.1,275 866.4,278.7 866.7,266.9 867,273.3 867.3,270 867.5,278.8 867.8,276.4 868.1,264.9 868.4,266.4 868.7,274.2 869,266.6 869.3,268.3 869.6,268.7 869.8,255.5 870.1,274.1 870.4,266.6 870.7,266.7 871,272.9 871.3,281.6 871.6,264.6 871.8,268.6 872.1,270.7 872.4,271.1 872.7,271.2 873,282.4 873.3,268.9 873.6,288.4 873.9,272.1 874.1,285.8 874.4,275.3 874.7,265.6 875,274.7 875.3,276.8 875.6,267.6 875.9,274.9 876.1,276.2 876.4,276.1 876.7,258.5 877,266.3 877.3,268.1 877.6,283.6 877.9,266.8 878.2,284.6 878.4,268.2 878.7,283 879,254.6 879.3,288.3 879.6,261.4 879.9,265.3 880.2,289.2 880.4,275 880.7,259.4 881,262.3 881.3,288.2 881.6,277.7 881.9,283.7 882.2,282.4 882.5,278.9 882.7,255.9 883,271.7 883.3,275.1 883.6,276.1 883.9,266.8 884.2,266.6 884.5,281.6 884.7,259.5 885,283.1 885.3,275.7 885.6,268.9 885.9,257.3 886.2,276.4 886.5,270.5 886.8,261.1 887,267.4 887.3,262.8 887.6,263.6 887.9,270.9 888.2,267.4 888.5,264.8 888.8,273.6 889.1,258.5 889.3,290.3 889.6,281.9 889.9,260 890.2,269.4 890.5,279.4 890.8,269.9 891.1,263.6 891.3,279.2 891.6,267.1 891.9,275.7 892.2,275.9 892.5,275.7 892.8,265.1 893.1,286 893.4,279.3 893.6,270.1 893.9,287.8 894.2,291.4 894.5,271.8 894.8,277.3 895.1,278.9 895.4,276.5 895.6,287.1 895.9,260.2 896.2,287.8 896.5,283 896.8,292.4 897.1,283.4 897.4,265.7 897.7,279.9 897.9,274.8 898.2,285.1 898.5,264.1 898.8,279.7 899.1,293 899.4,274.6 899.7,285 899.9,275.8 900.2,280 900.5,278.7 900.8,279.7 901.1,289.2 901.4,294.6 901.7,271.5 902,281.6 902.2,277.5 902.5,284.3 902.8,296.9 903.1,291.5 903.4,266.6 903.7,286.7 904,282.8 904.2,292.7 904.5,283.8 904.8,282.2 905.1,280.7 905.4,279.2 905.7,284.2 906,283.5 906.3,278.1 906.5,274.9 906.8,279 907.1,261.4 907.4,275.5 907.7,275.7 908,283.2 908.3,267.4 908.5,286.2 908.8,291.6 909.1,285.5 909.4,270.6 909.7,286.8 910,264 910.3,276.3 910.6,289.7 910.8,277.7 911.1,258.9 911.4,283.2 911.7,287.2 912,270.2 912.3,262.7 912.6,265.2 912.9,277.5 913.1,272.6 913.4,271.1 913.7,263.1 914,255.6 914.3,274.7 914.6,261.5 914.9,276.5 915.1,267.7 915.4,281.7 915.7,280 916,268.9 916.3,280.9 916.6,264.4 916.9,277.8 917.2,272.1 917.4,273.7 917.7,276.1 918,271.8 918.3,263.1 918.6,255 918.9,284.3 919.2,270.6 919.4,275.1 919.7,282 920,271 920.3,281.9 920.6,274.5 920.9,262.4 921.2,290.9 921.5,271.8 921.7,270 922,283.1 922.3,269.4 922.6,271.1 922.9,277.7 923.2,263.3 923.5,286.7 923.7,268.8 924,277 924.3,284.7 924.6,276.6 924.9,278.3 925.2,267.5 925.5,289.1 925.8,277.1 926,279.6 926.3,260.9 926.6,285.9 926.9,265.8 927.2,292 927.5,272.6 927.8,277.2 928,272.5 928.3,282.6 928.6,293 928.9,290.6 929.2,264.2 929.5,274.5 929.8,284.5 930.1,268.3 930.3,283.6 930.6,283.6 930.9,288.1 931.2,266.1 931.5,258.9 931.8,286.1 932.1,274.6 932.3,268.3 932.6,259 932.9,294.3 933.2,276.3 933.5,271.8 933.8,291.5 934.1,274.2 934.4,275.9 934.6,271.4 934.9,283.6 935.2,274.5 935.5,284 935.8,272.9 936.1,277.1 936.4,282.2 936.7,291.9 936.9,263.6 937.2,268.7 937.5,270.9 937.8,285.3 938.1,282.5 938.4,263.9 938.7,272.6 938.9,287.4 939.2,279.2 939.5,278.4 939.8,281.7 940.1,288.6 940.4,268.4 940.7,274.6 941,282 941.2,294.8 941.5,285.7 941.8,280.5 942.1,272.5 942.4,284 942.7,270.4 943,279.5 943.2,287.7 943.5,303 943.8,291.9 944.1,294.9 944.4,282.6 944.7,278.2 945,268.5 945.3,281.5 945.5,292.2 945.8,263.3 946.1,278.8 946.4,284.2 946.7,284.3 947,294.5 947.3,276.1 947.5,278.7 947.8,267.5 948.1,272.1 948.4,274.3 948.7,270.8 949,285.2 949.3,286.7 949.6,283.2 949.8,294.3 950.1,284.2 950.4,286 950.7,276.9 951,283.3 951.3,300.2 951.6,283 951.8,270.3 952.1,300.5 952.4,290.6 952.7,283.4 953,295.9 953.3,288.8 953.6,283.2 953.9,296 954.1,281.1 954.4,280.1 954.7,295.7 955,283.8 955.3,274 955.6,285.7 955.9,280.1 956.2,278.2 956.4,286.4 956.7,275.2 957,280.8 957.3,293.6 957.6,279.6 957.9,276.5 958.2,277.1 958.4,290.5 958.7,280.4 959,272 959.3,282.6 959.6,273.8 959.9,272.8 960.2,285.2 960.5,278.8 960.7,287.6 961,275.1 961.3,285.9 961.6,290.2 961.9,285.4 962.2,285.9 962.5,280.7 962.7,281 963,296.1 963.3,291.4 963.6,282.1 963.9,281.1 964.2,284.8 964.5,267.8 964.8,275.3 965,286.4 965.3,279 965.6,273.4 965.9,282.4 966.2,302 966.5,285 966.8,285.5 967,268.3 967.3,303.1 967.6,271.8 967.9,287.6 968.2,277.5 968.5,288.9 968.8,284.6 969.1,275.8 969.3,285.3 969.6,276.6 969.9,287.2 970.2,290.3 970.5,288.6 970.8,291.3 971.1,287.8 971.3,274.1 971.6,297.6 971.9,302.2 972.2,287 972.5,271.3 972.8,277.2 973.1,274.7 973.4,275.5 973.6,293.8 973.9,286 974.2,304.9 974.5,292.9 974.8,281.7 975.1,301.8 975.4,305.2 975.6,299.5 975.9,285.5 976.2,276.7 976.5,270.2 976.8,274.4 977.1,301.7 977.4,305.6 977.7,286.3 977.9,278 978.2,302.8 978.5,292.7 978.8,292 979.1,287.6 979.4,290 979.7,283.2 980,278.2 980.2,287.4 980.5,281.2 980.8,271.1 981.1,297.6 981.4,297.9 981.7,283.6 982,271.3 982.2,286.8 982.5,278.3 982.8,291.3 983.1,280 983.4,294.3 983.7,282.3 984,284.9 984.3,285 984.5,275.9 984.8,278.8 985.1,294.3 985.4,280.6 985.7,304.6 986,279.7 986.3,272.1 986.5,284 986.8,284.3 987.1,288.4 987.4,278.7 987.7,293.2 988,282.9 988.3,291.6 988.6,293.1 988.8,288 989.1,289.8 989.4,305.3 989.7,272.8 990,288.1 990.3,305.1 990.6,279.5 990.8,289.8 991.1,287.7 991.4,283.1 991.7,298 992,308.5 992.3,290.8 992.6,286.7 992.9,280.7 993.1,297.1 993.4,292.6 993.7,286.5 994,293.2 994.3,292.6 994.6,288 994.9,299.7 995.1,275.8 995.4,299.1 995.7,290.3 996,293.8 996.3,297.3 996.6,285.9 996.9,281.6 997.2,277.5 997.4,285.7 997.7,295.3 998,283.2 998.3,304.6 998.6,290.9 998.9,286.6 999.2,286.3 999.4,305.1 999.7,305.5 1000,276.3 1000.3,296.5 1000.6,307.1 1000.9,303.4 1001.2,291.9 1001.5,281.2 1001.7,292.2 1002,281.2 1002.3,290.3 1002.6,288.1 1002.9,283.4 1003.2,296.1 1003.5,289.9 1003.8,296.4 1004,298.7 1004.3,286.8 1004.6,300.6 1004.9,292.3 1005.2,300.5 1005.5,294.1 1005.8,298.2 1006,283.3 1006.3,292.7 1006.6,292.9 1006.9,278.4 1007.2,312 1007.5,304.2 1007.8,312.1 1008.1,294.1 1008.3,290.1 1008.6,288.3 1008.9,291.8 1009.2,302.5 1009.5,278.3 1009.8,291.7 1010.1,297.1 1010.3,305.1 1010.6,290.9 1010.9,299.4 1011.2,299.1 1011.5,293.1 1011.8,293.1 1012.1,302.8 1012.4,283.7 1012.6,304.7 1012.9,305.8 1013.2,292.7 1013.5,294.4 1013.8,295 1014.1,299.6 1014.4,295.4 1014.6,301.1 1014.9,311.2 1015.2,289.2 1015.5,305.5 1015.8,298.3 1016.1,289.5 1016.4,296.1 1016.7,279 1016.9,309.4 1017.2,303.5 1017.5,295.8 1017.8,284.1 1018.1,299.1 1018.4,310.1 1018.7,286.3 1018.9,305.5 1019.2,298.9 1019.5,288.9 1019.8,303.4 1020.1,301.4 1020.4,292.8 1020.7,299.3 1021,294.8 1021.2,306.3 1021.5,298.7 1021.8,307.8 1022.1,312.2 1022.4,281.6 1022.7,293.7 1023,289.5 1023.2,307 1023.5,298.4 1023.8,300.1 1024.1,311.4 1024.4,293.3 1024.7,305.1 1025,300.3 1025.3,312.6 1025.5,289.4 1025.8,291.6 1026.1,295.1 1026.4,309.7 1026.7,303.8 1027,287.6 1027.3,301.5 1027.6,296.6 1027.8,297.8 1028.1,309.5 1028.4,285.1 1028.7,316.9 1029,297.3 1029.3,300.2 1029.6,314.5 1029.8,296.5 1030.1,294.8 1030.4,299.2 1030.7,307.4 1031,295.6 1031.3,289.5 1031.6,297.9 1031.9,284 1032.1,292.1 1032.4,293 1032.7,287.3 1033,306.4 1033.3,305.1 1033.6,295.6 1033.9,295.6 1034.1,286.5 1034.4,289.9 1034.7,299 1035,298.6 1035.3,303.3 1035.6,304.1 1035.9,305 1036.2,292.5 1036.4,305.3 1036.7,304.3 1037,299.6 1037.3,305.8 1037.6,303.3 1037.9,318.9 1038.2,297.8 1038.4,304.1 1038.7,299.5 1039,297.9 1039.3,318.6 1039.6,284.1 1039.9,299.9 1040.2,299.7 1040.5,317.9 1040.7,295.6 1041,297.5 1041.3,304.6 1041.6,299 1041.9,289.4 1042.2,304.3 1042.5,309.6 1042.7,288.9 1043,298.8 1043.3,302.9 1043.6,285 1043.9,299.9 1044.2,303 1044.5,299 1044.8,305.2 1045,299.6 1045.3,300.3 1045.6,307.8 1045.9,304.2 1046.2,299 1046.5,298.4 1046.8,296.6 1047,294.8 1047.3,299.8 1047.6,297.4 1047.9,305.8 1048.2,304.6 1048.5,292.7 1048.8,320.7 1049.1,299 1049.3,286 1049.6,319.7 1049.9,288.7 1050.2,318.9 1050.5,299.4 1050.8,287.8 1051.1,289.1 1051.4,311.3 1051.6,315.1 1051.9,316.4 1052.2,296.5 1052.5,306.8 1052.8,303 1053.1,300.9 1053.4,299.6 1053.6,298.5 1053.9,302.3 1054.2,318.4 1054.5,290.1 1054.8,321.6 1055.1,292.2 1055.4,309.2 1055.7,305.5 1055.9,308.6 1056.2,307.2 1056.5,304 1056.8,306.4 1057.1,314 1057.4,296 1057.7,309.3 1057.9,291.5 1058.2,305.4 1058.5,310.5 1058.8,300 1059.1,295.8 1059.4,312.6 1059.7,306.7 1060,290.9 1060.2,313.4 1060.5,312 1060.8,302.1 1061.1,315.5 1061.4,322.2 1061.7,319.7 1062,300.8 1062.2,298.2 1062.5,298.9 1062.8,300.7 1063.1,315.8 1063.4,298.1 1063.7,293.8 1064,310.9 1064.3,295.7 1064.5,307.9 1064.8,302.8 1065.1,301.1 1065.4,318.3 1065.7,291 1066,312.5 1066.3,305.6 1066.5,309.2 1066.8,300.4 1067.1,300.7 1067.4,304.5 1067.7,291.6 1068,302.1 1068.3,308.5 1068.6,322.8 1068.8,307.4 1069.1,307.5 1069.4,312.9 1069.7,312.9 1070,299.4 1070.3,295.3 1070.6,287.8 1070.9,294.4 1071.1,311.6 1071.4,302.7 1071.7,317.7 1072,298.3 1072.3,301.8 1072.6,310.8 1072.9,306.1 1073.1,307.5 1073.4,311.1 1073.7,293 1074,288 1074.3,297.6 1074.6,295.5 1074.9,303.8 1075.2,308.6 1075.4,288.2 1075.7,308.8 1076,301.7 1076.3,306.5 1076.6,300 1076.9,305.9 1077.2,300 1077.4,317.3 1077.7,306.5 1078,292.9 1078.3,315.2 1078.6,311.8 1078.9,293 1079.2,301.9 1079.5,295.8 1079.7,329 1080,304.4 1080.3,317.6 1080.6,318.7 1080.9,302 1081.2,294.9 1081.5,319.8 1081.7,316.2 1082,311.4 1082.3,307.2 1082.6,318.3 1082.9,288.8 1083.2,300.6 1083.5,309.4 1083.8,311 1084,283.6 1084.3,288.9 1084.6,310.8 1084.9,303 1085.2,294.6 1085.5,317.3 1085.8,311.8 1086,293.9 1086.3,312.9 1086.6,310.5 1086.9,319 1087.2,313.6 1087.5,300.2 1087.8,314.3 1088.1,318.8 1088.3,312.5 1088.6,290.2 1088.9,305.1 1089.2,312 1089.5,305.4 1089.8,302.7 1090.1,305.8 1090.3,323.8 1090.6,304.2 1090.9,309 1091.2,299.2 1091.5,319.7 1091.8,297.4 1092.1,311.8 1092.4,323.1 1092.6,294.8 1092.9,312.1 1093.2,303.8 1093.5,308.8 1093.8,297.2 1094.1,297.1 1094.4,297 1094.7,300.8 1094.9,322.5 1095.2,323.2 1095.5,305.7 1095.8,316.5 1096.1,303.3 1096.4,306.1 1096.7,320.9 1096.9,317.4 1097.2,318.3 1097.5,316.1 1097.8,309.7 1098.1,301.5 1098.4,295.4 1098.7,317 1099,313.2 1099.2,293.4 1099.5,299.6 1099.8,305.8 1100.1,325.6 1100.4,320.3 1100.7,306.6 1101,313.6 1101.2,290.5 1101.5,307.3 1101.8,305.5 1102.1,318.5 1102.4,318 1102.7,314.5 1103,314.2 1103.3,310.5 1103.5,304.9 1103.8,306.2 1104.1,299 1104.4,321.1 1104.7,306.5 1105,306.3 1105.3,293.7 1105.5,310.6 1105.8,330.2 1106.1,316.2 1106.4,304.7 1106.7,304.9 1107,314.6 1107.3,312.8 1107.6,309 1107.8,303.3 1108.1,319.5 1108.4,300.5 1108.7,283 1109,291.2 1109.3,295.2 1109.6,312.7 1109.8,314.8 1110.1,291.3"/>
 <g fill="#fff" font-size="11" text-anchor="end">
  <text x="403" y="159.8">175</text><text x="403" y="182.8">150</text><text x="403" y="205.8">125</text><text x="403" y="228.8">100</text><text x="403" y="251.8">75</text><text x="403" y="275.8">50</text><text x="403" y="298.8">25</text><text x="403" y="321.8">0</text><text x="403" y="344.8">-25</text>
 </g>
 <g fill="#fff" font-size="11" text-anchor="middle">
  <text x="416.500" y="369">0</text><text x="473.500" y="369">200</text><text x="531" y="369">400</text><text x="588.500" y="369">600</text><text x="645.500" y="369">800</text><text x="702.500" y="369">1000</text><text x="760.500" y="369">1200</text><text x="817.500" y="369">1400</text><text x="874.500" y="369">1600</text><text x="932.500" y="369">1800</text><text x="989.500" y="369">2000</text><text x="1046.500" y="369">2200</text><text x="1104" y="369">2400</text>
 </g>
 <text x="771.500" y="122.800" fill="#fff" font-size="19.600" text-anchor="middle">Profile</text>
 <text x="1122" y="147" fill="#fff" font-size="13">Lines</text>
 <rect x="1124" y="158" width="13" height="3" fill="#ff0000"/>
 <text x="1141" y="163" fill="#fff" font-size="11">Profile</text>
 <text x="767.200" y="387" fill="#ff0000" font-size="13.400" font-weight="bold" text-anchor="middle">Pixels</text>
</svg>
<!-- buttons -->
<div class="btn" style="left:21px;top:353px;width:21px;height:20px"></div>
<svg class="abs" style="left:23px;top:354px" width="18" height="18" viewBox="0 0 18 18"><circle cx="9" cy="9.800" r="7.300" fill="#8a8a90"/><circle cx="8.400" cy="9.200" r="7.200" fill="#f4f6fa"/><circle cx="8.200" cy="9" r="6" fill="#1c48d0"/><text x="8.200" y="13.100" font-family="Liberation Sans, sans-serif" font-weight="bold" font-size="11.500" fill="#fff" text-anchor="middle">?</text></svg>
<div class="btn rt" style="left:50px;top:350px;width:83px;height:23px;line-height:23px">Calibrate</div>
<div class="btn rt" style="left:151px;top:350px;width:83px;height:23px;line-height:23px">Appearance</div>
<div class="btn rt" style="left:253px;top:350px;width:83px;height:23px;line-height:23px;text-align:left;padding-left:7px">Reference</div>
<div class="abs" style="left:321px;top:353px;width:1px;height:17px;background:#606060"></div>
<svg class="abs" style="left:324px;top:359px" width="9" height="5" viewBox="0 0 9 5"><path d="M0 0h9L4.500 5z" fill="#000"/></svg>
<!-- group -->
<div class="abs" style="left:343px;top:353px;width:245px;height:182px;border:1px solid #d5dfe5;border-radius:4px"></div>
<div class="lbl rt" style="left:347px;top:347px;background:#f0f0f0;padding:0 2px">Controls</div>
<div class="cb" style="left:365px;top:369px"><svg class="abs" style="left:1px;top:1px" width="9" height="9" viewBox="0 0 9 9"><path d="M1 4l2.500 3.500L8 .8" fill="none" stroke="#2a3fa0" stroke-width="1.800"/></svg></div>
<div class="lbl rt" style="left:381px;top:370px;letter-spacing:-0.17px">Auto-Scale Y-Axis</div>
<div class="cb" style="left:365px;top:393px"></div>
<div class="lbl rt" style="left:381px;top:394px;letter-spacing:-0.35px">Use second X-Axis</div>
<div class="cb" style="left:365px;top:418px"></div>
<div class="lbl rt" style="left:381px;top:419px;letter-spacing:-0.26px">Use second Y-Axis</div>
<div class="cb" style="left:365px;top:443px"></div>
<div class="btn rt" style="left:381px;top:441px;width:98px;height:18px;line-height:16px;text-align:left;padding-left:6px">Average - 100</div>
<div class="abs" style="left:465px;top:443px;width:1px;height:14px;background:#404040"></div>
<svg class="abs" style="left:467px;top:448px" width="9" height="5" viewBox="0 0 9 5"><path d="M0 0h9L4.500 5z" fill="#000"/></svg>
<div class="cb" style="left:365px;top:468px"></div>
<div class="lbl rt" style="left:381px;top:469px;letter-spacing:-0.31px">Show Focus Tool</div>
<div class="cb" style="left:365px;top:493px"></div>
<div class="lbl rt" style="left:381px;top:494px;letter-spacing:-0.22px">Logarithmic Y-axis</div>
<div class="cb" style="left:365px;top:518px"></div>
<div class="lbl rt" style="left:381px;top:519px;letter-spacing:-0.26px">Synthesize</div>

 </div>
</div>
</body></html>
